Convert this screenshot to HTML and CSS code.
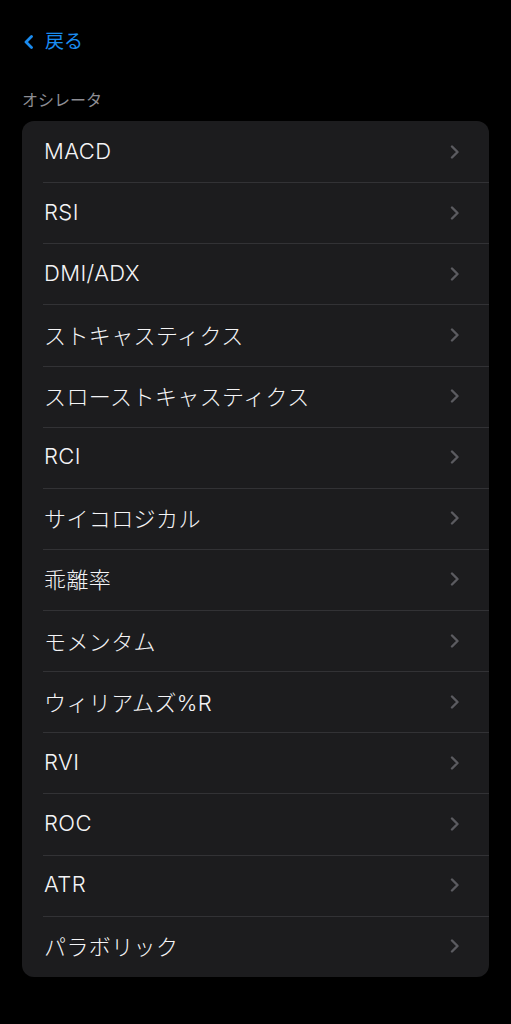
FILE: index.html
```html
<!DOCTYPE html>
<html lang="ja">
<head>
<meta charset="utf-8">
<link rel="stylesheet" href="styles.css">
</head>
<body>
<div class="page">
  <nav class="nav">
    <a class="back">
      <svg class="back-icon" width="12" height="14" viewBox="0 0 12 14"><path d="M8.5 1.5 L3 7 L8.5 12.5" fill="none" stroke="#1a8cf0" stroke-width="2.8" stroke-linecap="round" stroke-linejoin="round"/></svg>
      <span>戻る</span>
    </a>
  </nav>
  <div class="section-title">オシレータ</div>
  <ul class="list">
    <li class="row"><span class="label">MACD</span><svg class="chev" width="10" height="14" viewBox="0 0 10 14"><path d="M2 1.5 L7.5 7 L2 12.5" fill="none" stroke="#5b5b60" stroke-width="2.4" stroke-linecap="round" stroke-linejoin="round"/></svg></li>
    <li class="row"><span class="label">RSI</span><svg class="chev" width="10" height="14" viewBox="0 0 10 14"><path d="M2 1.5 L7.5 7 L2 12.5" fill="none" stroke="#5b5b60" stroke-width="2.4" stroke-linecap="round" stroke-linejoin="round"/></svg></li>
    <li class="row"><span class="label">DMI/ADX</span><svg class="chev" width="10" height="14" viewBox="0 0 10 14"><path d="M2 1.5 L7.5 7 L2 12.5" fill="none" stroke="#5b5b60" stroke-width="2.4" stroke-linecap="round" stroke-linejoin="round"/></svg></li>
    <li class="row"><span class="label">ストキャスティクス</span><svg class="chev" width="10" height="14" viewBox="0 0 10 14"><path d="M2 1.5 L7.5 7 L2 12.5" fill="none" stroke="#5b5b60" stroke-width="2.4" stroke-linecap="round" stroke-linejoin="round"/></svg></li>
    <li class="row"><span class="label">スローストキャスティクス</span><svg class="chev" width="10" height="14" viewBox="0 0 10 14"><path d="M2 1.5 L7.5 7 L2 12.5" fill="none" stroke="#5b5b60" stroke-width="2.4" stroke-linecap="round" stroke-linejoin="round"/></svg></li>
    <li class="row"><span class="label">RCI</span><svg class="chev" width="10" height="14" viewBox="0 0 10 14"><path d="M2 1.5 L7.5 7 L2 12.5" fill="none" stroke="#5b5b60" stroke-width="2.4" stroke-linecap="round" stroke-linejoin="round"/></svg></li>
    <li class="row"><span class="label">サイコロジカル</span><svg class="chev" width="10" height="14" viewBox="0 0 10 14"><path d="M2 1.5 L7.5 7 L2 12.5" fill="none" stroke="#5b5b60" stroke-width="2.4" stroke-linecap="round" stroke-linejoin="round"/></svg></li>
    <li class="row"><span class="label">乖離率</span><svg class="chev" width="10" height="14" viewBox="0 0 10 14"><path d="M2 1.5 L7.5 7 L2 12.5" fill="none" stroke="#5b5b60" stroke-width="2.4" stroke-linecap="round" stroke-linejoin="round"/></svg></li>
    <li class="row"><span class="label">モメンタム</span><svg class="chev" width="10" height="14" viewBox="0 0 10 14"><path d="M2 1.5 L7.5 7 L2 12.5" fill="none" stroke="#5b5b60" stroke-width="2.4" stroke-linecap="round" stroke-linejoin="round"/></svg></li>
    <li class="row"><span class="label">ウィリアムズ%R</span><svg class="chev" width="10" height="14" viewBox="0 0 10 14"><path d="M2 1.5 L7.5 7 L2 12.5" fill="none" stroke="#5b5b60" stroke-width="2.4" stroke-linecap="round" stroke-linejoin="round"/></svg></li>
    <li class="row"><span class="label">RVI</span><svg class="chev" width="10" height="14" viewBox="0 0 10 14"><path d="M2 1.5 L7.5 7 L2 12.5" fill="none" stroke="#5b5b60" stroke-width="2.4" stroke-linecap="round" stroke-linejoin="round"/></svg></li>
    <li class="row"><span class="label">ROC</span><svg class="chev" width="10" height="14" viewBox="0 0 10 14"><path d="M2 1.5 L7.5 7 L2 12.5" fill="none" stroke="#5b5b60" stroke-width="2.4" stroke-linecap="round" stroke-linejoin="round"/></svg></li>
    <li class="row"><span class="label">ATR</span><svg class="chev" width="10" height="14" viewBox="0 0 10 14"><path d="M2 1.5 L7.5 7 L2 12.5" fill="none" stroke="#5b5b60" stroke-width="2.4" stroke-linecap="round" stroke-linejoin="round"/></svg></li>
    <li class="row"><span class="label">パラボリック</span><svg class="chev" width="10" height="14" viewBox="0 0 10 14"><path d="M2 1.5 L7.5 7 L2 12.5" fill="none" stroke="#5b5b60" stroke-width="2.4" stroke-linecap="round" stroke-linejoin="round"/></svg></li>
  </ul>
</div>
</body>
</html>
```
FILE: styles.css
```css
html, body {
  margin: 0;
  padding: 0;
  background: #000;
}
body {
  font-family: Inter, "Noto Sans CJK JP", sans-serif;
  color: #fff;
  width: 511px;
  height: 1024px;
  overflow: hidden;
}
.page {
  padding: 0 22px;
}
.nav {
  height: 84px;
  display: flex;
  align-items: flex-start;
  padding-top: 30px;
  box-sizing: border-box;
}
.back {
  display: flex;
  align-items: center;
  gap: 10px;
  color: #1a8cf0;
  font-size: 19px;
  line-height: 24px;
  padding-left: 1px;
}
.section-title {
  color: #8d8d93;
  font-size: 16px;
  line-height: 20px;
  height: 37px;
  padding-top: 6px;
  box-sizing: border-box;
}
.list {
  list-style: none;
  margin: 0;
  padding: 0;
  background: #1c1c1e;
  border-radius: 12px;
  overflow: hidden;
}
.row {
  position: relative;
  height: 61.14px;
  display: flex;
  align-items: center;
  justify-content: space-between;
  padding: 0 29px 2px 22px;
  box-sizing: border-box;
}
.row + .row::before {
  content: "";
  position: absolute;
  top: 0;
  left: 21px;
  right: 0;
  height: 1px;
  background: #323235;
}
.label {
  font-size: 22px;
  font-weight: 300;
  letter-spacing: 0.4px;
  color: #f4f4f6;
}
.chev {
  display: block;
  margin-top: 2px;
}
```
